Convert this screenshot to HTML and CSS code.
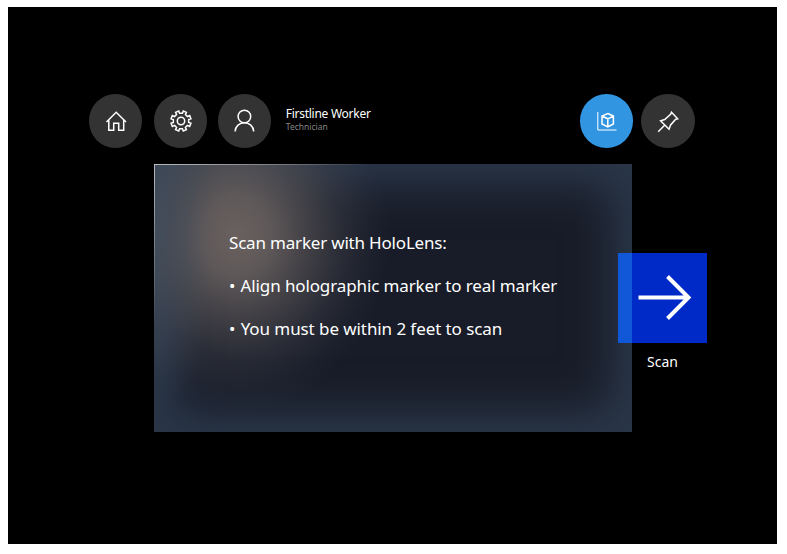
FILE: index.html
```
<!DOCTYPE html>
<html lang="en">
<head>
<meta charset="utf-8">
<title>Scan marker</title>
<link rel="stylesheet" href="styles.css">
</head>
<body>
<main class="stage">
  <header class="toolbar">
    <button class="round" aria-label="Home">
      <svg viewBox="-27 -27 54 54"><path d="M-9.5 1 .2-8.700 10 1M-7.200-.8V9.200H-2.300V2.200H2.700V9.200H7.700V-.8"/></svg>
    </button>
    <button class="round settings" aria-label="Settings">
      <svg viewBox="-27 -27 54 54"><path d="M7.670 1.420 9.940 2.290 8.650 5.410 6.430 4.420 4.420 6.430 5.410 8.650 2.290 9.940 1.420 7.670H-1.420L-2.290 9.940-5.410 8.650-4.420 6.430-6.430 4.420-8.650 5.410-9.940 2.290-7.670 1.420V-1.420L-9.940-2.290-8.650-5.410-6.430-4.420-4.420-6.430-5.410-8.650-2.290-9.940-1.420-7.670H1.420L2.290-9.940 5.410-8.650 4.420-6.430 6.430-4.420 8.650-5.410 9.940-2.290 7.670-1.420Z"/><circle r="3.700"/></svg>
    </button>
    <button class="round user" aria-label="Account">
      <svg viewBox="-27 -27 54 54"><circle cx="-.6" cy="-4.500" r="6.300"/><path d="M-9.900 10.500C-9.600 5.200-5.600 1.800-.6 1.800S8.400 5.200 8.700 10.500"/></svg>
    </button>
    <div class="identity">
      <div class="name">Firstline Worker</div>
      <div class="role">Technician</div>
    </div>
    <button class="round active" aria-label="Hologram">
      <svg viewBox="-27 -27 54 54"><path class="thin" d="M-9.200-9V9H9.500"/><path d="M.8-7.500 6.400-5V3L.8 6-5 3V-5ZM-5-5 .8-2.200 6.400-5M.8-2.200V6"/></svg>
    </button>
    <button class="round pin" aria-label="Pin">
      <svg viewBox="-27 -27 54 54"><path d="M3.500-8.800 9.700-2.200 7.500-1.600 2.600 4 1 8.200-7.400-.2-3.300-1.500 2.600-6.800ZM-3.200 4-9.800 10.700"/></svg>
    </button>
  </header>
  <section class="panel">
    <div class="copy">
      <p class="l1">Scan marker with HoloLens:</p>
      <p class="l2"><span class="dot">•</span> Align holographic marker to real marker</p>
      <p class="l3"><span class="dot">•</span> You must be within 2 feet to scan</p>
    </div>
    <button class="scan">
      <span class="tile"><svg viewBox="0 0 90 90"><path d="M20.500 44.500H70.500M49.500 23.500 70.500 44.500 49.500 65.500"/></svg></span>
      <span class="label">Scan</span>
    </button>
  </section>
</main>
</body>
</html>
```
FILE: styles.css
```
* { box-sizing: border-box; }
body { margin: 0; padding: 7px 10px 10px 8px; height: 554px; background: #fff; font-family: "Noto Sans", "Open Sans", sans-serif; color: #fff; overflow: hidden; }
button { border: 0; padding: 0; background: none; color: inherit; font: inherit; }
p { margin: 0; white-space: nowrap; width: max-content; }
.stage { height: 537px; background: #000; padding: 87px 82.5px 0 80.5px; }
.toolbar { display: flex; height: 54px; }
.round { width: 53.5px; height: 54px; border-radius: 50%; background: #333; flex: none; }
.round svg { display: block; width: 54px; height: 54px; fill: none; stroke: #fff; stroke-width: 1.5; }
.round .thin { stroke-width: 1; }
.settings { margin-left: 11.8px; }
.user { margin-left: 10.3px; }
.active { margin-left: auto; background: #3295e2; }
.pin { margin-left: 8px; }
.identity { padding: 11px 0 0 14.7px; white-space: nowrap; }
.name { font-size: 12px; line-height: 17px; letter-spacing: -.27px; }
.role { font-size: 8.5px; line-height: 9px; color: #858585; }
.panel { position: relative; width: 478px; height: 268px; margin: 16px 0 0 65.5px; padding: 66px 0 0 75px; background: #181c28; box-shadow: inset 0 0 46px 20px #2b384a; }
/* warm light and the lit top-left edges */
.panel::before {
  content: ""; position: absolute; inset: 0;
  background:
    linear-gradient(90deg, #b8bcc0, #8a8c90 20%, transparent 45%) top / 100% 1px no-repeat,
    linear-gradient(#b8bcc0, #788088 30%, transparent 60%) left / 1px 100% no-repeat,
    radial-gradient(ellipse 60px 210px at 0 50px, rgba(64,80,98,.6), transparent),
    radial-gradient(ellipse 155px 175px at 82px 72px, rgba(112,102,99,.93), rgba(108,100,98,.84) 22%, rgba(98,92,92,.58) 45%, rgba(88,86,92,.28) 68%, rgba(80,82,92,.08) 88%, transparent);
}
.copy { position: relative; font-size: 17px; line-height: 26px; display: grid; gap: 17px; }
.l1 { letter-spacing: -.19px; }
.l2 { letter-spacing: -.12px; }
.l3 { letter-spacing: -.08px; }
.dot { margin-right: 1px; }
.scan { position: absolute; left: 464px; top: 89px; width: 89px; display: flex; flex-direction: column; align-items: center; gap: 9px; }
.tile { width: 89px; height: 90px; background: linear-gradient(90deg, #1158d8 14px, #002ac8 14px); }
.tile svg { display: block; width: 90px; height: 90px; fill: none; stroke: #fff; stroke-width: 4; }
.label { font-size: 14px; line-height: 20px; }
```
